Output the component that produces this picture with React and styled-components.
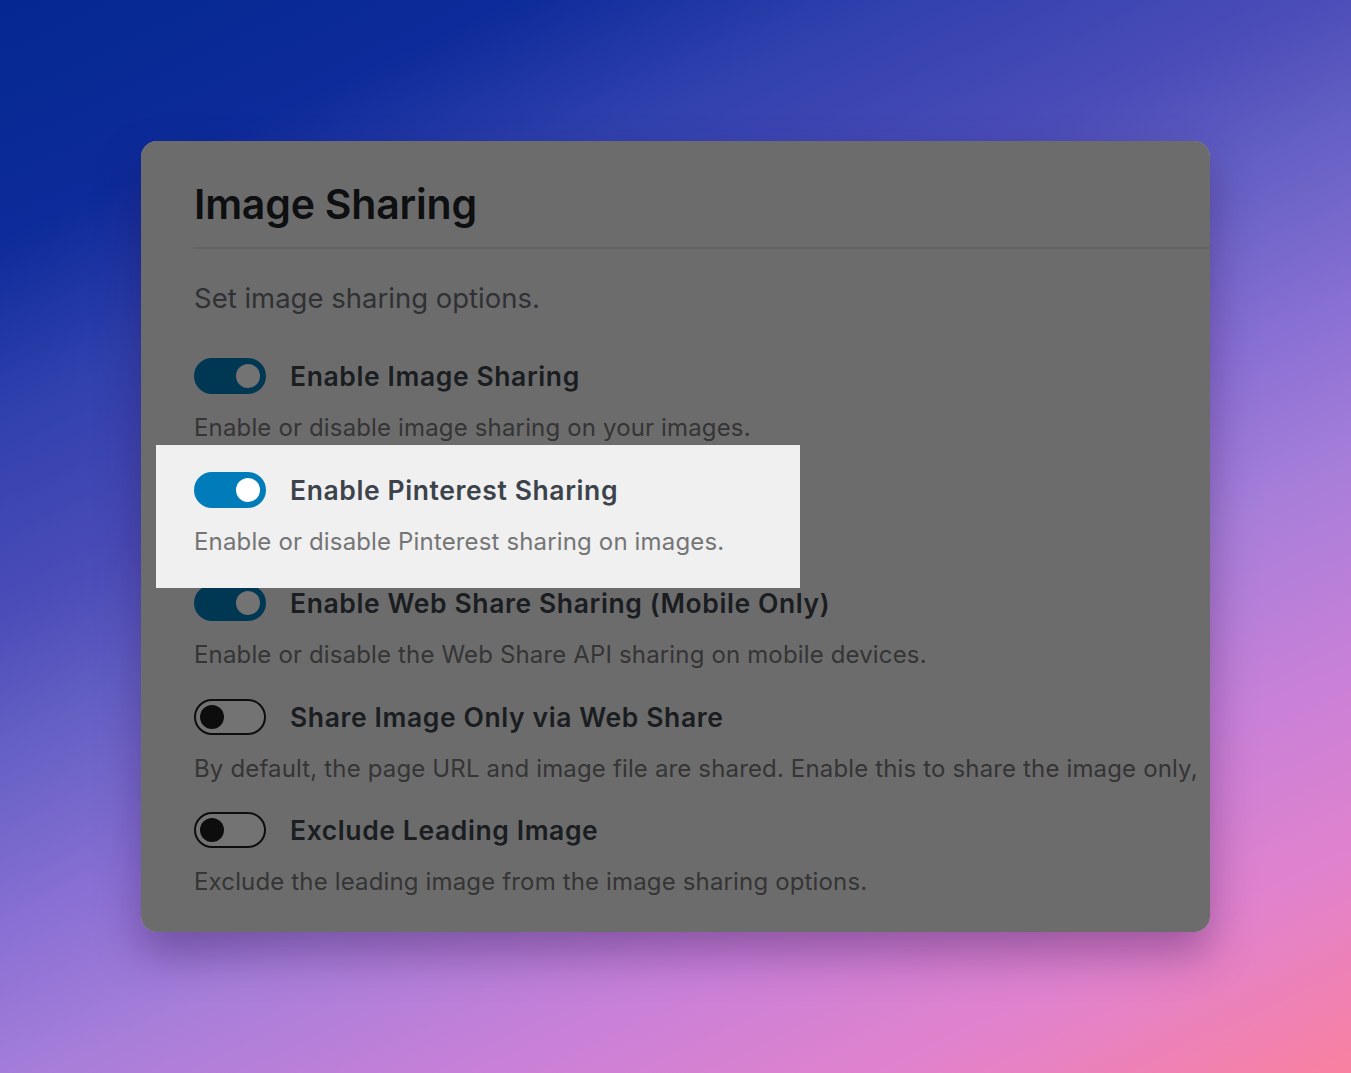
import React from "react";
import styled, { createGlobalStyle } from "styled-components";

const Global = createGlobalStyle`
  html, body { margin: 0; padding: 0; }
  body {
    min-height: 1073px;
    background: linear-gradient(155deg,
      #03288f 0%, #0d2b9a 14%, #2f40ad 24%, #4b4cb8 36%, #6460c4 44%,
      #8a70d4 55%, #a67ed9 64%, #c880d8 76%, #e282cc 88%, #f9809f 100%);
    font-family: Inter, "Noto Sans", sans-serif;
    -webkit-font-smoothing: antialiased;
  }
  #root { padding-top: 141px; padding-bottom: 1px; }
`;

const Card = styled.section`
  width: 1069px;
  margin: 0 auto;
  box-sizing: border-box;
  padding: 39px 0 34px 53px;
  background: #f0f0f1;
  border-radius: 16px;
  overflow: hidden;
  box-shadow: 0 22px 44px rgba(40, 10, 70, 0.35);
`;

const Header = styled.header`
  padding-bottom: 19px;
  border-bottom: 2px solid #dcdcde;
`;

const Title = styled.h1`
  margin: 0;
  font-size: 41px;
  line-height: 48px;
  font-weight: 600;
  color: #1d2327;
  letter-spacing: -0.2px;
`;

const Intro = styled.p`
  margin: 31px 0 0;
  font-size: 27.5px;
  line-height: 36px;
  color: #6a6e73;
`;

const List = styled.div`
  margin-top: 42px;
  display: flex;
  flex-direction: column;
  gap: 27.5px;
`;

const Setting = styled.div`
  display: flex;
  flex-direction: column;
  ${(p) => p.$spot && `position: relative; z-index: 1;`}
`;

const Spotlight = styled.div`
  position: absolute;
  top: -27px;
  left: -38px;
  width: 644px;
  height: 143px;
  z-index: -1;
  background: #f0f0f1;
  box-shadow: 0 0 0 3000px rgba(0, 0, 0, 0.55);
`;

const ToggleRow = styled.label`
  display: flex;
  align-items: center;
  gap: 24px;
  height: 36px;
`;

const Track = styled.span`
  box-sizing: border-box;
  flex: none;
  width: 72px;
  height: 36px;
  border-radius: 18px;
  display: flex;
  align-items: center;
  padding: 0 4px;
  justify-content: ${(p) => (p.$on ? "flex-end" : "flex-start")};
  background: ${(p) => (p.$on ? "#007cba" : "#ffffff")};
  border: 2px solid ${(p) => (p.$on ? "#007cba" : "#1e1e1e")};
`;

const Thumb = styled.span`
  width: 24px;
  height: 24px;
  border-radius: 50%;
  background: ${(p) => (p.$on ? "#ffffff" : "#1e1e1e")};
`;

const Label = styled.span`
  font-size: 26.5px;
  font-weight: 600;
  letter-spacing: 0.6px;
  color: #3c434a;
  white-space: nowrap;
`;

const Help = styled.p`
  margin: 18px 0 0;
  font-size: 24px;
  line-height: 32px;
  letter-spacing: 0.15px;
  color: #757575;
  white-space: nowrap;
`;

const settings = [
  {
    label: "Enable Image Sharing",
    help: "Enable or disable image sharing on your images.",
    on: true,
  },
  {
    label: "Enable Pinterest Sharing",
    help: "Enable or disable Pinterest sharing on images.",
    on: true,
    spot: true,
  },
  {
    label: "Enable Web Share Sharing (Mobile Only)",
    help: "Enable or disable the Web Share API sharing on mobile devices.",
    on: true,
  },
  {
    label: "Share Image Only via Web Share",
    help: "By default, the page URL and image file are shared. Enable this to share the image only,",
    on: false,
  },
  {
    label: "Exclude Leading Image",
    help: "Exclude the leading image from the image sharing options.",
    on: false,
  },
];

function Toggle({ on }) {
  return (
    <Track $on={on}>
      <Thumb $on={on} />
    </Track>
  );
}

export default function App() {
  return (
    <>
      <Global />
      <Card>
        <Header>
          <Title>Image Sharing</Title>
        </Header>
        <Intro>Set image sharing options.</Intro>
        <List>
          {settings.map((s) => (
            <Setting key={s.label} $spot={s.spot}>
              {s.spot && <Spotlight />}
              <ToggleRow>
                <Toggle on={s.on} />
                <Label>{s.label}</Label>
              </ToggleRow>
              <Help>{s.help}</Help>
            </Setting>
          ))}
        </List>
      </Card>
    </>
  );
}
